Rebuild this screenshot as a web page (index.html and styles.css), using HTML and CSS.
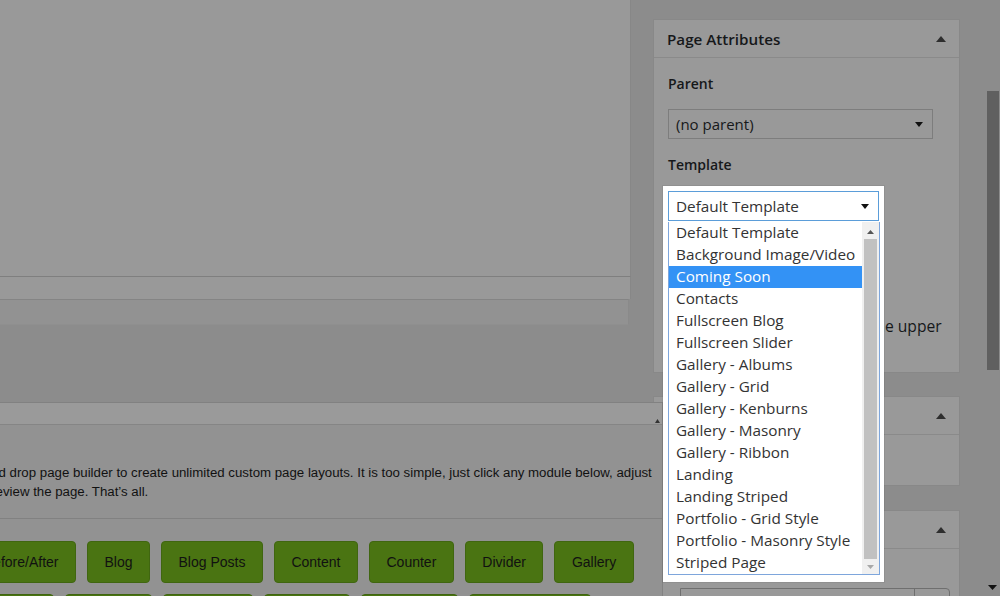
FILE: index.html
```html
<!DOCTYPE html>
<html lang="en">
<head>
    <meta charset="UTF-8">
    <title>Edit Page</title>
    <link rel="stylesheet" href="styles.css">
</head>
<body>
    <div class="page">
        <div class="main">
            <div class="editor">
                <div class="editor-area"></div>
                <div class="editor-status"></div>
                <div class="editor-foot"></div>
            </div>

            <div class="builder">
                <div class="builder-head">
                    <svg class="toggle-sm" width="5" height="4" viewBox="0 0 5 4"><path d="M0 4 L2.5 0 L5 4 Z"/></svg>
                </div>
                <div class="builder-intro">
                    <p>Simply use the drag and drop page builder to create unlimited custom page layouts. It is too simple, just click any module below, adjust<br>all of its options and preview the page. That&rsquo;s all.</p>
                </div>
                <div class="modules">
                    <div class="module-row">
                        <button class="module">Accordion</button>
                        <button class="module">Before/After</button>
                        <button class="module">Blog</button>
                        <button class="module">Blog Posts</button>
                        <button class="module">Content</button>
                        <button class="module">Counter</button>
                        <button class="module">Divider</button>
                        <button class="module">Gallery</button>
                    </div>
                    <div class="module-row">
                        <button class="module">Google Map</button>
                        <button class="module">Image</button>
                        <button class="module">Heading</button>
                        <button class="module">Icon Box</button>
                        <button class="module">Portfolio</button>
                        <button class="module">Page Title</button>
                        <button class="module">Pricing Tables</button>
                    </div>
                </div>
            </div>
        </div>

        <div class="sidebar">
            <div class="postbox">
                <h2 class="hndle">Page Attributes
                    <svg class="toggle" width="10" height="6" viewBox="0 0 10 6"><path d="M0 6 L5 0 L10 6 Z"/></svg>
                </h2>
                <div class="inside">
                    <p class="field-label">Parent</p>
                    <div class="select parent-select">
                        <span>(no parent)</span>
                        <svg width="8" height="5" viewBox="0 0 8 5"><path d="M0 0 L8 0 L4 5 Z"/></svg>
                    </div>
                    <p class="field-label">Template</p>
                    <div class="template-field">
                        <div class="select template-select"></div>

                        <div class="dropdown">
                            <div class="dd-select">
                                <span>Default Template</span>
                                <svg width="8" height="5" viewBox="0 0 8 5"><path d="M0 0 L8 0 L4 5 Z"/></svg>
                            </div>
                            <div class="dd-list">
                                <ul class="dd-options">
                                    <li>Default Template</li>
                                    <li>Background Image/Video</li>
                                    <li class="active">Coming Soon</li>
                                    <li>Contacts</li>
                                    <li>Fullscreen Blog</li>
                                    <li>Fullscreen Slider</li>
                                    <li>Gallery - Albums</li>
                                    <li>Gallery - Grid</li>
                                    <li>Gallery - Kenburns</li>
                                    <li>Gallery - Masonry</li>
                                    <li>Gallery - Ribbon</li>
                                    <li>Landing</li>
                                    <li>Landing Striped</li>
                                    <li>Portfolio - Grid Style</li>
                                    <li>Portfolio - Masonry Style</li>
                                    <li>Striped Page</li>
                                </ul>
                                <div class="dd-scroll">
                                    <svg class="dd-up" width="7" height="4" viewBox="0 0 7 4"><path d="M0 4 L3.5 0 L7 4 Z"/></svg>
                                    <div class="dd-thumb"></div>
                                    <svg class="dd-down" width="7" height="4" viewBox="0 0 7 4"><path d="M0 0 L7 0 L3.5 4 Z"/></svg>
                                </div>
                            </div>
                        </div>
                    </div>
                    <p class="field-label">Order</p>
                    <div class="input">0</div>
                    <p class="help">Need help? Click on Help in the upper right corner of the screen.</p>
                </div>
            </div>

            <div class="postbox">
                <h2 class="hndle">Featured Image
                    <svg class="toggle" width="10" height="6" viewBox="0 0 10 6"><path d="M0 6 L5 0 L10 6 Z"/></svg>
                </h2>
                <div class="inside short"></div>
            </div>

            <div class="postbox">
                <h2 class="hndle">Page Options
                    <svg class="toggle" width="10" height="6" viewBox="0 0 10 6"><path d="M0 6 L5 0 L10 6 Z"/></svg>
                </h2>
                <div class="inside nested">
                    <p class="field-label small-gap">Category</p>
                    <div class="combo">
                        <span class="combo-value"></span>
                        <span class="combo-arrow"></span>
                    </div>
                </div>
            </div>
        </div>

        <div class="scrollbar">
            <div class="scroll-thumb"></div>
            <svg class="scroll-down" width="9" height="5" viewBox="0 0 9 5"><path d="M0 0 L9 0 L4.5 5 Z"/></svg>
        </div>
    </div>
</body>
</html>
```

FILE: styles.css
```css
/* Page, dimmed behind the template picker */
body {
    margin: 0;
    height: 596px;
    overflow: hidden;
    background-color: #8c8c8c;
    font-family: "Open Sans", "Liberation Sans", sans-serif;
    color: #16181a;
}

.page {
    display: flex;
    align-items: flex-start;
    height: 596px;
}

/* Main column (scrolled to the right a little) */
.main {
    flex: none;
    width: 820px;
    margin-left: -157px;
    margin-right: -10px;
    position: relative;
    z-index: 1;
}

.editor {
    width: 788px;
}

.editor-area {
    height: 276px;
    background-color: #999;
    border-right: 1px solid #878787;
}

.editor-status {
    height: 22px;
    background-color: #999;
    border-top: 1px solid #7f7f7f;
    border-right: 1px solid #878787;
}

.editor-foot {
    height: 24px;
    margin-right: 2px;
    background-color: #929292;
    border-top: 1px solid #848484;
    border-right: 1px solid #8a8a8a;
    border-bottom: 1px solid #8f8f8f;
}

.builder {
    margin-top: 77px;
    border-top: 1px solid #818181;
    border-right: 1px solid #838383;
    background-color: #929292;
    font-family: "Liberation Sans", Arial, sans-serif;
    color: #111;
}

.builder-head {
    position: relative;
    height: 21px;
    background-color: #9a9a9a;
    border-bottom: 1px solid #858585;
}

.toggle-sm {
    position: absolute;
    right: 2px;
    bottom: 1px;
    fill: #333;
}

.builder-intro {
    padding: 38px 0 17px 20px;
    border-bottom: 1px solid #818181;
}

.builder-intro p {
    margin: 0;
    font-size: 13.25px;
    line-height: 19px;
}

.modules {
    padding: 22px 0 0 15px;
    display: flex;
    flex-direction: column;
    gap: 11px;
}

.module-row {
    display: flex;
    gap: 11px;
}

.module {
    height: 42px;
    padding: 0 16.5px;
    background-color: #4a7412;
    border: 1px solid #406610;
    border-radius: 4px;
    font-family: "Liberation Sans", Arial, sans-serif;
    font-size: 14px;
    color: #111;
    white-space: nowrap;
}

/* Sidebar */
.sidebar {
    flex: none;
    width: 307px;
    padding-top: 19px;
    display: flex;
    flex-direction: column;
    gap: 23px;
}

.postbox {
    background-color: #999;
    border: 1px solid #888;
}

.postbox + .postbox + .postbox {
    margin-top: 1px;
}

.hndle {
    margin: 0;
    height: 37px;
    padding: 0 13px 0 13px;
    display: flex;
    align-items: center;
    justify-content: space-between;
    font-size: 15.2px;
    font-weight: 600;
    border-bottom: 1px solid #8a8a8a;
}

.toggle {
    fill: #2e2e2e;
}

.inside {
    padding: 0 12px 13px 14px;
}

.inside.short {
    height: 50px;
    padding: 0;
}

.inside.nested {
    padding-left: 26px;
    padding-bottom: 20px;
}

.field-label {
    margin: 16px 0 0;
    font-size: 14px;
    font-weight: 600;
    line-height: 20px;
}

.field-label.small-gap {
    margin-top: 9px;
    font-weight: 400;
}

.select {
    box-sizing: border-box;
    height: 30px;
    margin-top: 15px;
    padding: 0 9px 0 7px;
    display: flex;
    align-items: center;
    justify-content: space-between;
    border: 1px solid #7d7d7d;
    font-size: 15px;
}

.parent-select {
    width: 265px;
}

.template-select {
    width: 211px;
}

.template-field {
    position: relative;
    margin-top: 16px;
}

.template-field .select {
    margin-top: 0;
}

.input {
    box-sizing: border-box;
    width: 60px;
    height: 28px;
    margin-top: 15px;
    padding: 0 7px;
    border: 1px solid #7d7d7d;
    font-size: 14px;
    line-height: 26px;
}

.help {
    margin: 15px -10px 0 0;
    font-size: 15.65px;
    line-height: 22px;
}

.combo {
    box-sizing: border-box;
    display: flex;
    width: 270px;
    height: 30px;
    margin-top: 10px;
    border: 1px solid #6f6f6f;
    border-radius: 0 4px 4px 0;
}

.combo-value {
    flex: 1;
}

.combo-arrow {
    width: 34px;
    border-left: 1px solid #6f6f6f;
}

/* Open template list, drawn above the dim layer */
.dropdown {
    position: absolute;
    top: -5px;
    left: -5px;
    z-index: 5;
    width: 221px;
    padding: 5px 5px 7px 5px;
    box-sizing: border-box;
    background-color: #fff;
    box-shadow: 0 0 0 1px rgba(0, 0, 0, 0.06);
    font-size: 15.3px;
    color: #333;
}

.dd-select {
    box-sizing: border-box;
    height: 30px;
    padding: 0 9px 0 7px;
    display: flex;
    align-items: center;
    justify-content: space-between;
    border: 1px solid #5b9dd9;
}

.dd-select svg,
.select svg {
    fill: #111;
}

.dd-list {
    display: flex;
    width: 210px;
    border: 1px solid #7ea6dc;
    border-top: none;
    margin-top: 1px;
}

.dd-options {
    flex: 1;
    margin: 0;
    padding: 0;
    list-style: none;
}

.dd-options li {
    height: 22px;
    padding-left: 7px;
    line-height: 21px;
    white-space: nowrap;
}

.dd-options li.active {
    background-color: #3392f5;
    color: #fff;
}

.dd-scroll {
    width: 17px;
    display: flex;
    flex-direction: column;
    align-items: center;
    background-color: #f0f0f0;
}

.dd-up {
    margin-top: 8px;
    fill: #555;
}

.dd-thumb {
    width: 13px;
    height: 320px;
    margin-top: 5px;
    background-color: #c1c1c1;
}

.dd-down {
    margin-top: 6px;
    fill: #a8a8a8;
}

/* Window scrollbar */
.scrollbar {
    flex: none;
    width: 15px;
    height: 596px;
    margin-left: 25px;
    display: flex;
    flex-direction: column;
    align-items: center;
}

.scroll-thumb {
    width: 12px;
    height: 279px;
    margin-top: 91px;
    background-color: #606060;
}

.scroll-down {
    margin-top: auto;
    margin-bottom: 6px;
    fill: #111;
}
```
